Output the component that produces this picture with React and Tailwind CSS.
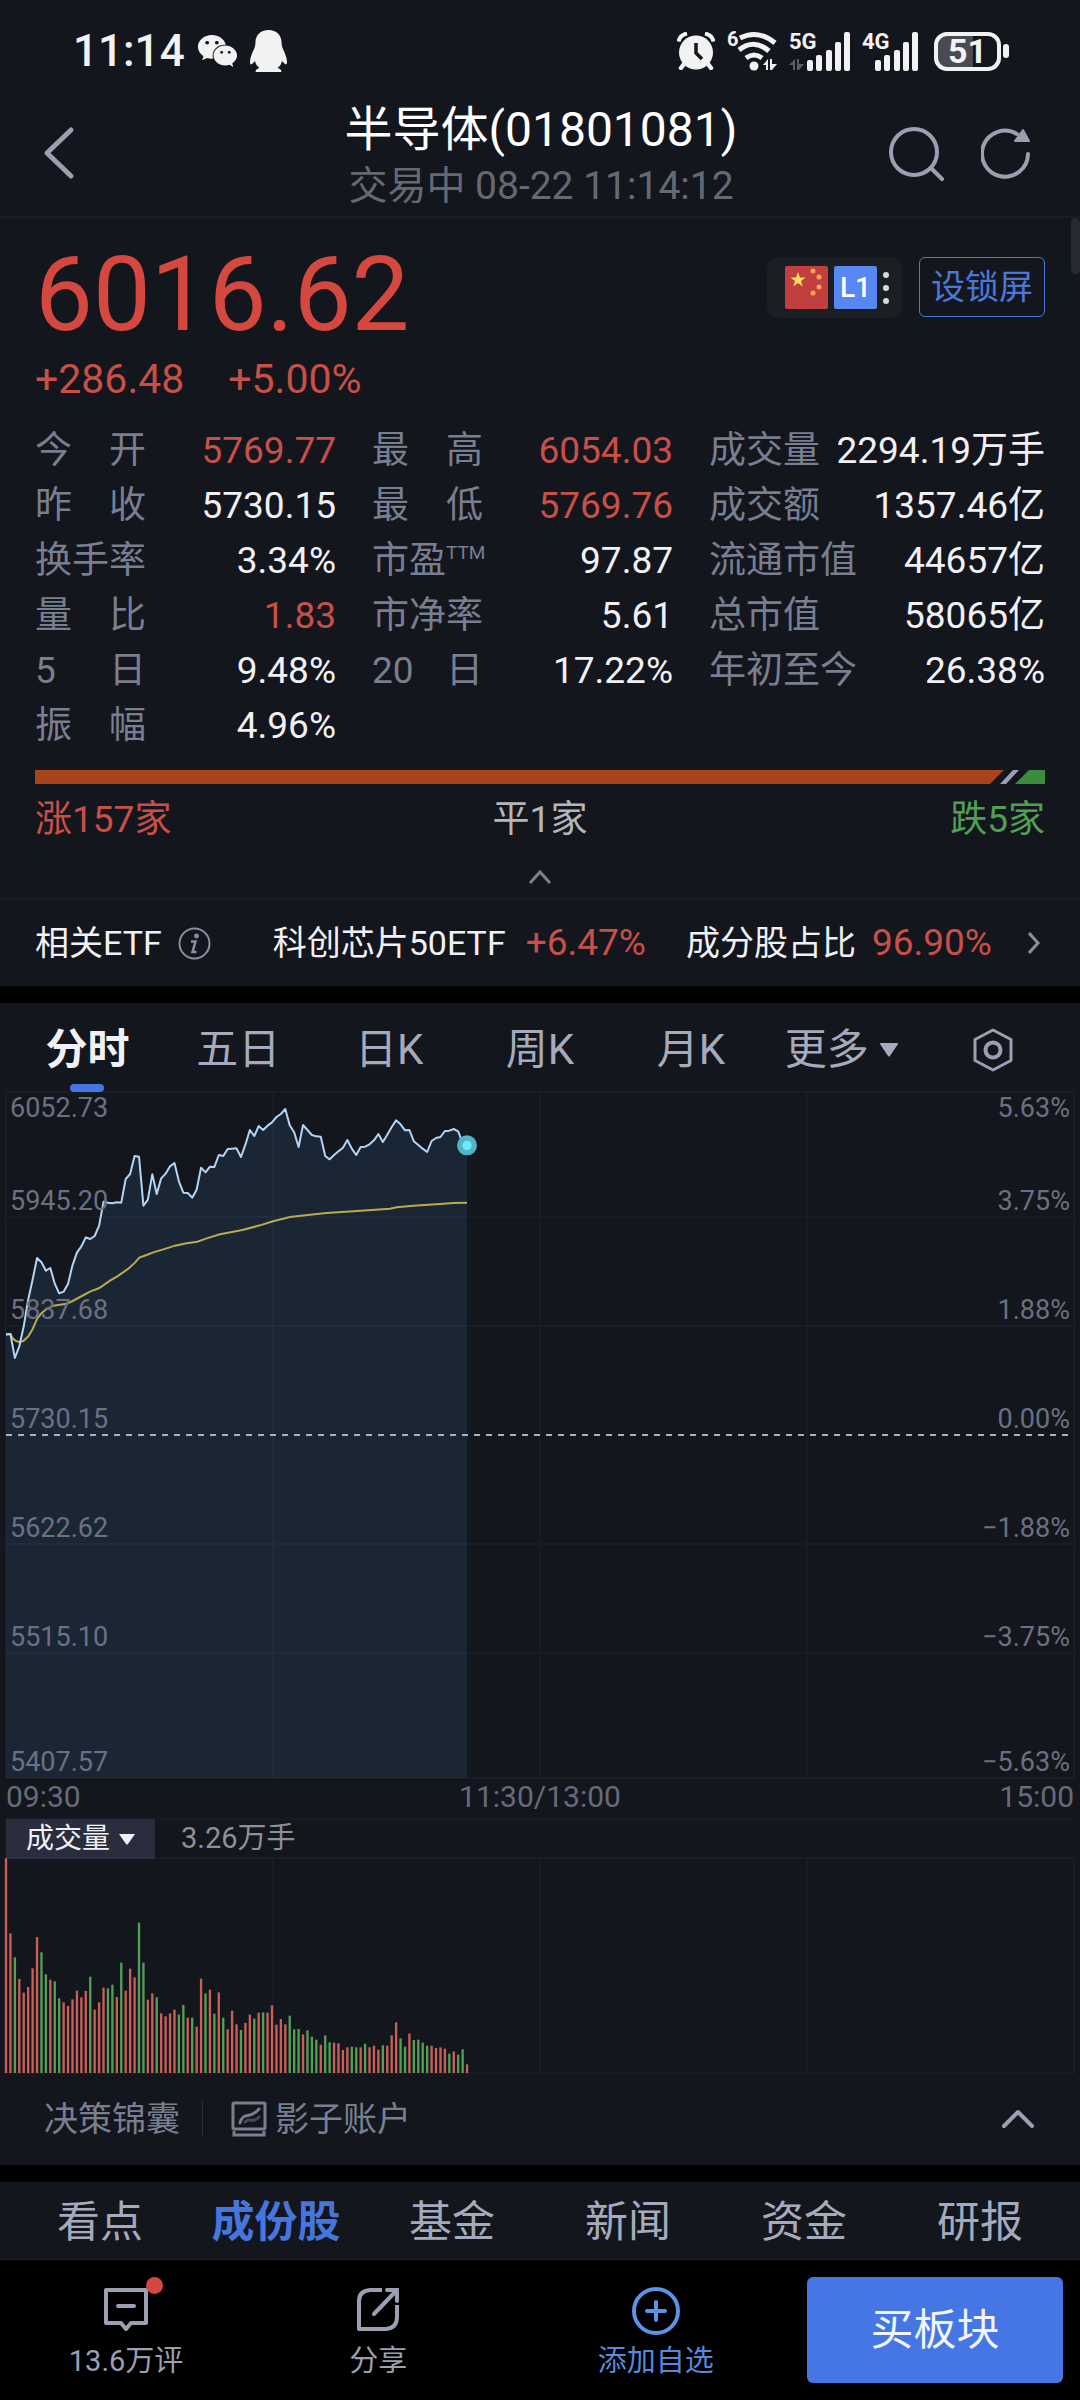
import { useState } from "react"
import { FaWeixin } from "react-icons/fa"

const UP = "#cb5f57"
const DOWN = "#539f55"
const STEP = 13.3

const stats = [
  { label: ["今", "开"], value: "5769.77", up: true },
  { label: ["最", "高"], value: "6054.03", up: true },
  { label: ["成交量"], value: "2294.19万手" },
  { label: ["昨", "收"], value: "5730.15" },
  { label: ["最", "低"], value: "5769.76", up: true },
  { label: ["成交额"], value: "1357.46亿" },
  { label: ["换手率"], value: "3.34%" },
  { label: ["市盈"], sup: "TTM", value: "97.87" },
  { label: ["流通市值"], value: "44657亿" },
  { label: ["量", "比"], value: "1.83", up: true },
  { label: ["市净率"], value: "5.61" },
  { label: ["总市值"], value: "58065亿" },
  { label: ["5", "日"], value: "9.48%" },
  { label: ["20", "日"], value: "17.22%" },
  { label: ["年初至今"], value: "26.38%" },
  { label: ["振", "幅"], value: "4.96%" },
]

// one point per minute from 09:30
const price = [
  765, 763, 835, 800, 740, 660, 600, 535, 548, 573, 565, 612, 641, 636, 612, 557, 519, 500, 473, 478, 469, 438, 366, 369,
  371, 368, 369, 298, 283, 229, 231, 378, 360, 284, 343, 296, 282, 260, 250, 305, 339, 340, 354, 330, 264, 278, 261, 262,
  226, 229, 208, 207, 206, 232, 195, 151, 169, 139, 151, 138, 128, 112, 103, 88, 137, 158, 202, 136, 151, 166, 170, 171,
  229, 239, 226, 215, 204, 181, 207, 226, 202, 201, 194, 182, 163, 187, 165, 142, 122, 134, 152, 151, 185, 196, 207, 217,
  184, 175, 172, 154, 153, 148, 155, 190, 197,
]

const average =
  "18,763 31,763 38,776 48,784 58,787 70,784 85,770 98,748 111,718 125,700 140,688 160,678 200,672 218,664 240,652 270,636 298,625 330,603 352,590 385,567 405,549 418,534 440,526 460,518 490,509 525,498 560,491 592,486 620,476 660,464 700,456 730,450 780,437 819,425 870,412 930,405 980,400 1060,395 1170,387 1190,383 1240,378 1320,373 1360,370 1401,369"

const volume = [
  644, 419, 347, 282, 241, 258, 314, 408, 362, 296, 280, 275, 224, 212, 201, 221, 247, 227, 246, 289, 190, 212, 256, 254,
  265, 228, 331, 247, 313, 287, 451, 331, 220, 239, 227, 179, 170, 179, 190, 175, 204, 166, 166, 139, 283, 239, 250, 178,
  242, 166, 131, 187, 146, 129, 150, 175, 163, 181, 182, 181, 203, 145, 162, 146, 172, 131, 132, 116, 128, 109, 100, 85,
  113, 92, 91, 89, 69, 77, 79, 77, 77, 88, 77, 82, 70, 83, 82, 113, 152, 104, 79, 118, 99, 100, 91, 82, 82, 75, 77, 73,
  58, 65, 55, 71, 26,
]

const volumeSide =
  "rrgrrrrrggrggrrrrrrgrrrggrgrrrggrrgrrrrggrgrrgrgrgrrrgrrgrgrrrrrgggrgggrggrrrrggrgrrrgrrrggrggggrrrrgrggr"

const levels = [
  { price: "5945.20", pct: "3.75%", grow: "flex-[125]" },
  { price: "5837.68", pct: "1.88%", grow: "flex-[109]" },
  { price: "5730.15", pct: "0.00%", grow: "flex-[109]" },
  { price: "5622.62", pct: "−1.88%", grow: "flex-[109]" },
  { price: "5515.10", pct: "−3.75%", grow: "flex-[109]" },
  { price: "5407.57", pct: "−5.63%", grow: "flex-[125]" },
]

function SignalBars() {
  return (
    <>
      <rect x="18" y="28" width="6" height="11" rx="2" />
      <rect x="27" y="23" width="6" height="16" rx="2" />
      <rect x="37" y="18" width="6" height="21" rx="2" />
      <rect x="46" y="10" width="6" height="29" rx="2" />
      <rect x="55" y="0" width="6" height="39" rx="2" />
    </>
  )
}

function StatusBar() {
  return (
    <div className="flex h-[104px] items-center justify-between pr-[71px] pb-[2px] pl-[73px] text-[#f2f2f2]">
      <div className="flex items-center gap-3">
        <span className="text-[44px] leading-none font-medium">11:14</span>
        <FaWeixin className="h-11 w-[41px]" aria-label="微信" />
        <svg className="h-[42px] w-[37px]" viewBox="0 0 37 42" fill="currentColor" aria-label="QQ">
          <path d="M18.500 0C10.500 0 5.500 5.500 5.500 12c0 2-.3 4-1 6C2 23 0 28 0 32c0 2.500 1 3 2.500 1.500L5 31c.5 3 2 5 4.500 7-2 .5-4 1.500-4 4h26c0-2.500-2-3.500-4-4 2.500-2 4-4 4.500-7l2.500 2.500C36 35 37 34.500 37 32c0-4-2-9-4.500-14-.7-2-1-4-1-6 0-6.500-5-12-13-12z" />
        </svg>
      </div>
      <div className="flex items-center gap-3">
        <svg className="h-[38px] w-[38px]" viewBox="0 0 38 38" fill="none" aria-label="闹钟">
          <circle cx="19" cy="20.500" r="17" fill="#f2f2f2" />
          <path d="M1.500 9.500Q3 3 10 1.500M36.500 9.500Q35 3 28 1.500" stroke="#f2f2f2" strokeWidth="4" />
          <path d="M7 32l-3 4M31 32l3 4" stroke="#f2f2f2" strokeWidth="4.500" strokeLinecap="round" />
          <path d="M19 11v10l6 6" stroke="#14161e" strokeWidth="3.500" />
        </svg>
        <div className="relative pl-2">
          <span className="absolute -top-[3px] left-0 text-[20px] leading-[22px] font-bold">6</span>
          <svg className="h-10 w-[42px]" viewBox="0 0 42 40" fill="none" stroke="#f2f2f2" strokeWidth="5" aria-label="Wi-Fi">
            <path d="M5 7Q23-2 40 12M4 19Q19 7 34 20M11 27q8-6 16 0" />
            <circle cx="19" cy="35" r="4.500" fill="#f2f2f2" stroke="none" />
            <path d="M28 34l5-6v11h-2v-5zM35 28h2v5h5l-5 6h-2z" fill="#f2f2f2" stroke="none" />
          </svg>
        </div>
        <div className="relative">
          <span className="absolute -top-[2px] left-0 text-[22px] leading-6 font-bold">5G</span>
          <svg className="h-[39px] w-[61px]" viewBox="0 0 61 39" fill="#f2f2f2" aria-hidden="true">
            <path d="M0 33l6-6v11H4v-5zM8 27h2v5h5l-5 6H8z" fill="#5c5d62" />
            <SignalBars />
          </svg>
        </div>
        <div className="relative">
          <span className="absolute -top-[2px] left-0 text-[22px] leading-6 font-bold">4G</span>
          <svg className="h-[39px] w-14" viewBox="5 0 56 39" fill="#f2f2f2" aria-hidden="true">
            <SignalBars />
          </svg>
        </div>
        <div className="ml-1 flex items-center gap-[2px]">
          <div className="flex h-[39px] w-[67px] items-center justify-center rounded-[13px] border-4 border-[#f2f2f2] bg-linear-to-r from-[#4a4b50] from-60% to-transparent to-60% text-[34px] leading-none font-bold">
            51
          </div>
          <div className="h-[14px] w-[6px] rounded-[3px] bg-[#f2f2f2]" />
        </div>
      </div>
    </div>
  )
}

function Header() {
  return (
    <header className="flex h-[114px] items-start justify-between border-b-2 border-[#1b1d26] pr-[49px] pl-[43px]">
      <button className="mt-[22px] w-[150px]" aria-label="返回">
        <svg className="h-[55px] w-8" viewBox="0 0 32 55" fill="none" stroke="#9aa0b1" strokeWidth="5" strokeLinecap="round" strokeLinejoin="round">
          <path d="M28 4L4 27l24 23" />
        </svg>
      </button>
      <div className="text-center">
        <h1 className="text-[48px] leading-[52px] text-white">半导体(01801081)</h1>
        <p className="text-[39px] leading-[60px] text-[#666974]">交易中 08-22 11:14:12</p>
      </div>
      <div className="mt-[21px] flex gap-9">
        <button aria-label="搜索">
          <svg className="h-[56px] w-[56px]" viewBox="0 0 56 56" fill="none" stroke="#9aa0b1" strokeWidth="4" strokeLinecap="round">
            <circle cx="25" cy="27" r="23" />
            <path d="M42 43l11 11" />
          </svg>
        </button>
        <button aria-label="刷新">
          <svg className="h-[56px] w-[50px]" viewBox="0 0 50 56" fill="none" stroke="#9aa0b1" strokeWidth="4" strokeLinecap="round">
            <path d="M47 29A23 23 0 1 1 36 9" />
            <path d="M42 5l6 11H34z" fill="#9aa0b1" strokeWidth="2" strokeLinejoin="round" />
          </svg>
        </button>
      </div>
    </header>
  )
}

function Quote() {
  return (
    <section className="px-[35px] pt-[29px]">
      <div className="flex items-start justify-between">
        <div className="text-[103px] leading-[96px] text-[#d5483f]">6016.62</div>
        <div className="mt-[10px] flex gap-[17px]">
          <button className="flex h-[61px] items-center gap-[6px] rounded-xl bg-[#1b1e22] pr-[13px] pl-[18px]" aria-label="行情级别">
            <svg className="h-[43px] w-[43px]" viewBox="0 0 43 43">
              <rect width="43" height="43" rx="2" fill="#c33f3f" />
              <path d="M13 6l2 5.500h5.500l-4.500 3.500 1.700 5.500-4.700-3.400-4.700 3.400L10 15l-4.500-3.500H11z" fill="#fbdc5e" />
              <g fill="#f3a853">
                <circle cx="28" cy="5" r="2.500" />
                <circle cx="34" cy="11" r="2.500" />
                <circle cx="34" cy="21" r="2.500" />
                <circle cx="28" cy="27" r="2.500" />
              </g>
            </svg>
            <span className="flex h-[43px] w-[43px] items-center justify-center rounded-xs bg-[#5687f3] text-[28px] leading-none font-medium text-white">
              L1
            </span>
            <span className="flex flex-col gap-[7px]">
              <i className="size-[6px] rounded-full bg-[#d8d8d8]" />
              <i className="size-[6px] rounded-full bg-[#d8d8d8]" />
              <i className="size-[6px] rounded-full bg-[#d8d8d8]" />
            </span>
          </button>
          <button className="h-[60px] rounded-md border border-[#4a78d8] px-[11px] text-[34px] leading-[56px] text-[#4a78d8]">
            设锁屏
          </button>
        </div>
      </div>
      <div className="mt-2 flex gap-11 text-[41px] leading-[56px] text-[#c94f47]">
        <span>+286.48</span>
        <span>+5.00%</span>
      </div>
      <dl className="mt-4 grid grid-cols-[301fr_301fr_336fr] gap-x-9 text-[37px] leading-[55px]">
        {stats.map((item) => (
          <div key={item.value} className="flex justify-between whitespace-nowrap">
            <dt className="flex min-w-[111px] justify-between text-[#787f90]">
              {item.label.map((part) => (
                <span key={part}>{part}</span>
              ))}
              {item.sup && <sup className="top-0 text-[19px] leading-[40px]">{item.sup}</sup>}
            </dt>
            <dd className={item.up ? "text-[#c94f47]" : "text-[#f1f1f5]"}>{item.value}</dd>
          </div>
        ))}
      </dl>
    </section>
  )
}

function Breadth() {
  return (
    <section className="px-[35px] pt-[17px]">
      <svg className="h-[14px] w-full" viewBox="0 0 1010 14" preserveAspectRatio="none">
        <path d="M0 0h969l-14 14H0z" fill="#a8431b" />
        <path d="M978 0h6l-13 14h-6z" fill="#9aa0b1" />
        <path d="M994 0h16v14h-30z" fill="#3d8b3d" />
      </svg>
      <div className="mt-2 grid grid-cols-3 text-[37px] leading-[56px]">
        <span className="text-[#c94f47]">涨157家</span>
        <span className="text-center text-[#b4b6ba]">平1家</span>
        <span className="text-right text-[#4fa052]">跌5家</span>
      </div>
      <button className="flex h-[50px] w-full items-center justify-center pt-2" aria-label="收起">
        <svg className="h-4 w-6" viewBox="0 0 24 16" fill="none" stroke="#7c8190" strokeWidth="3">
          <path d="M2 14L12 3l10 11" />
        </svg>
      </button>
    </section>
  )
}

function EtfRow() {
  return (
    <a href="#etf" className="flex h-[88px] items-center border-t-2 border-[#1b1d26] pr-10 pl-[35px] text-[34px] text-[#f1f1f5]">
      <span>相关ETF</span>
      <svg className="ml-4 size-[33px]" viewBox="0 0 33 33" fill="none" stroke="#8b90a0" aria-label="说明">
        <circle cx="16.500" cy="16.500" r="15" strokeWidth="2" />
        <circle cx="18.500" cy="9" r="2.400" fill="#8b90a0" stroke="none" />
        <path d="M13 14.500h4.500L14.500 25h4" strokeWidth="2.500" />
      </svg>
      <span className="ml-[62px]">科创芯片50ETF</span>
      <span className="ml-5 text-[37px] text-[#c94f47]">+6.47%</span>
      <span className="ml-10">成分股占比</span>
      <span className="ml-4 text-[37px] text-[#c94f47]">96.90%</span>
      <svg className="ml-auto h-[22px] w-3" viewBox="0 0 12 22" fill="none" stroke="#8b90a0" strokeWidth="3">
        <path d="M1 1l9 10-9 10" />
      </svg>
    </a>
  )
}

function ChartTabs() {
  const [active, setActive] = useState("分时")
  return (
    <div className="grid h-[89px] grid-cols-7 px-3 text-[42px] text-[#a5abbc]">
      {["分时", "五日", "日K", "周K", "月K"].map((tab) => (
        <button
          key={tab}
          onClick={() => setActive(tab)}
          className={tab === active ? "relative pt-1 font-bold text-[#f1f1f5]" : "relative pt-1"}
        >
          {tab}
          {tab === active && <i className="absolute bottom-0 left-1/2 h-2 w-[34px] -translate-x-1/2 rounded-full bg-[#4675e4]" />}
        </button>
      ))}
      <button className="flex items-center justify-center gap-[10px] pt-1">
        更多
        <svg className="h-[14px] w-5" viewBox="0 0 20 14" fill="#a5abbc">
          <path d="M1 1Q0 0 2 0h16q2 0 1 1l-8 12q-1 1-2 0z" />
        </svg>
      </button>
      <button className="flex items-center justify-center pt-1" aria-label="设置">
        <svg className="h-11 w-10" viewBox="0 0 40 44" fill="none" stroke="#9aa0b1" strokeWidth="3" strokeLinejoin="round">
          <path d="M20 2L38 11.500v21L20 42 2 32.500v-21z" />
          <circle cx="20" cy="22" r="7.500" strokeWidth="4" />
        </svg>
      </button>
    </div>
  )
}

function PriceChart() {
  const line = price.map((y, i) => `${18 + i * STEP},${y}`).join(" ")
  return (
    <div className="relative mx-[6px] h-[686px]">
      <svg className="h-full w-full overflow-visible" viewBox="18 37 3204 2058" preserveAspectRatio="none" fill="none">
        <polygon points={`18,2095 ${line} 1401,2095`} fill="#1b2635" />
        <path
          d="M18 37h3204v2058H18zM18 412h3204M18 739h3204M18 1393h3204M18 1720h3204M819 37v2058M1620 37v2058M2421 37v2058"
          stroke="#8a93b0"
          strokeOpacity="0.05"
          strokeWidth="2"
          vectorEffect="non-scaling-stroke"
        />
        <path d="M18 1066h3204" stroke="#a9b3bf" strokeWidth="2" strokeDasharray="6 6" vectorEffect="non-scaling-stroke" />
        <polyline points={average} stroke="#b9ab4f" strokeWidth="2" vectorEffect="non-scaling-stroke" />
        <polyline points={line} stroke="#b3d5f5" strokeWidth="2" strokeLinejoin="round" vectorEffect="non-scaling-stroke" />
        <circle cx="1401" cy="197" r="30" fill="#53b4c6" />
        <circle cx="1401" cy="197" r="14" fill="#6ceaf8" />
      </svg>
      <div className="absolute inset-0 flex flex-col px-1 text-[27px] leading-8 text-[#6b7082]">
        {levels.map((level, i) => (
          <div key={level.price} className={`${level.grow} flex flex-col justify-between`}>
            <div className="flex justify-between">
              {i === 0 && <span>6052.73</span>}
              {i === 0 && <span>5.63%</span>}
            </div>
            <div className="flex justify-between">
              <span>{level.price}</span>
              <span>{level.pct}</span>
            </div>
          </div>
        ))}
      </div>
    </div>
  )
}

function VolumeChart() {
  return (
    <div className="mx-[6px]">
      <div className="grid h-10 grid-cols-3 text-[30px] leading-[38px] text-[#666b7c]">
        <span>09:30</span>
        <span className="text-center">11:30/13:00</span>
        <span className="text-right">15:00</span>
      </div>
      <div className="flex h-10 items-center gap-[26px] border-t-2 border-[#191b24] text-[28px] text-[#8d9099]">
        <label className="flex h-10 w-[149px] items-center justify-center gap-2 bg-[#292d3e] text-[#f1f1f5]">
          <select className="appearance-none bg-transparent" aria-label="副图指标">
            <option>成交量</option>
          </select>
          <svg className="h-[11px] w-4" viewBox="0 0 16 11" fill="#f1f1f5">
            <path d="M0 0h16L9 10q-1 1-2 0z" />
          </svg>
        </label>
        <span className="text-[29px]">3.26万手</span>
      </div>
      <svg className="h-[215px] w-full overflow-visible" viewBox="18 0 3204 645" preserveAspectRatio="none">
        <path
          d="M18 0h3204v645H18zM819 0v645M1620 0v645M2421 0v645"
          fill="none"
          stroke="#8a93b0"
          strokeOpacity="0.05"
          strokeWidth="2"
          vectorEffect="non-scaling-stroke"
        />
        {volume.map((v, i) => (
          <rect key={i} x={14.5 + i * STEP} y={645 - v} width="7" height={v} fill={volumeSide[i] === "r" ? UP : DOWN} />
        ))}
      </svg>
    </div>
  )
}

function ToolRow() {
  return (
    <div className="flex h-[92px] items-center pr-[46px] pl-11 text-[34px] text-[#787f90]">
      <button>决策锦囊</button>
      <i className="mx-[22px] h-9 w-px bg-[#2a2d38]" />
      <button className="ml-[6px] flex items-center gap-2">
        <svg className="size-9" viewBox="0 0 36 36" fill="none" stroke="#787f90" strokeWidth="3">
          <rect x="2" y="2" width="32" height="26" rx="1" />
          <path d="M3 30v4h30v-4" />
          <path d="M9 22c3-12 10-3 19-14" strokeLinecap="round" />
          <path d="M14 21c5-5 9 2 14-5" stroke="#464b59" strokeLinecap="round" />
        </svg>
        影子账户
      </button>
      <button className="ml-auto" aria-label="展开">
        <svg className="h-5 w-8" viewBox="0 0 32 20" fill="none" stroke="#9aa0b1" strokeWidth="4" strokeLinecap="round" strokeLinejoin="round">
          <path d="M2 17L16 3l14 14" />
        </svg>
      </button>
    </div>
  )
}

function InfoTabs() {
  const [active, setActive] = useState("成份股")
  return (
    <nav className="grid h-[78px] grid-cols-6 border-b border-[#22242c] bg-[#14161e] px-3 pt-1 text-[43px] text-[#a5abbc]">
      {["看点", "成份股", "基金", "新闻", "资金", "研报"].map((tab) => (
        <button key={tab} onClick={() => setActive(tab)} className={tab === active ? "font-bold text-[#4675dc]" : ""}>
          {tab}
        </button>
      ))}
    </nav>
  )
}

function BottomBar() {
  return (
    <footer className="flex h-[140px] bg-black p-[17px] pl-0 text-[29px] leading-9 text-[#9aa0b1]">
      <button className="flex flex-[5] flex-col items-center pt-2">
        <span className="relative">
          <svg className="h-12 w-11" viewBox="0 0 44 48" fill="none" stroke="#9aa0b1" strokeWidth="4" strokeLinejoin="round">
            <path d="M2 5h40v33H27l-5 6-5-6H2z" />
            <path d="M14 21h16" strokeLinecap="round" />
          </svg>
          <i className="absolute -top-2 -right-[15px] size-[17px] rounded-full bg-[#d5483f]" />
        </span>
        <span className="mt-[10px]">13.6万评</span>
      </button>
      <button className="flex flex-[5] flex-col items-center pt-2">
        <svg className="h-12 w-11" viewBox="0 0 44 48" fill="none" stroke="#9aa0b1" strokeWidth="4">
          <path d="M26 5H14Q3 6 3 16v28h27q11-1 11-12V20" strokeLinejoin="round" />
          <path d="M31 5h10v11M40 6L18 29" strokeLinecap="round" />
        </svg>
        <span className="mt-[10px]">分享</span>
      </button>
      <button className="flex flex-[6] flex-col items-center pt-2 text-[#5589dc]">
        <svg className="size-[52px]" viewBox="0 0 52 52" fill="none" stroke="#5c93e6" strokeWidth="4" strokeLinecap="round">
          <circle cx="26" cy="26" r="22" />
          <path d="M17 26h18M26 17v18" />
        </svg>
        <span className="mt-[6px]">添加自选</span>
      </button>
      <button className="w-64 rounded-md bg-[#4675e4] text-[43px] text-[#f1f5ff]">买板块</button>
    </footer>
  )
}

export default function App() {
  return (
    <div className="relative bg-black font-['Roboto','Noto_Sans_CJK_SC',sans-serif]">
      <div className="bg-[#14161e]">
        <StatusBar />
        <Header />
        <Quote />
        <Breadth />
        <EtfRow />
      </div>
      <main className="my-[17px] bg-[#14161e]">
        <ChartTabs />
        <PriceChart />
        <VolumeChart />
        <ToolRow />
      </main>
      <InfoTabs />
      <BottomBar />
      <i className="absolute top-[218px] right-0 h-14 w-[9px] rounded-full bg-[#282a31]" />
    </div>
  )
}
